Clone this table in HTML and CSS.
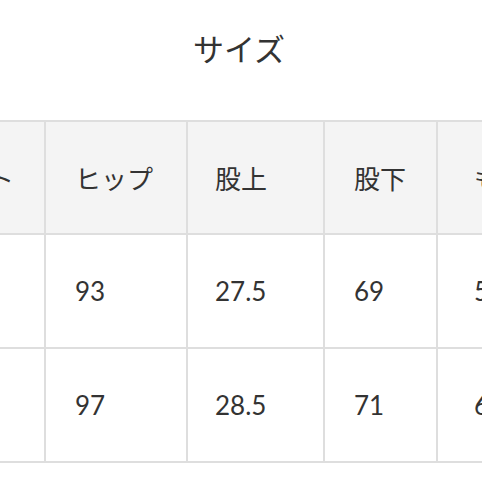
FILE: index.html
```html
<!DOCTYPE html>
<html lang="ja">
<head>
<meta charset="utf-8">
<link rel="stylesheet" href="styles.css">
</head>
<body>
<h2 class="title">サイズ</h2>
<div class="wrap">
<table class="size-table">
<colgroup>
<col class="c1"><col class="c2"><col class="c3"><col class="c4"><col class="c5">
</colgroup>
<thead>
<tr>
<th class="p1">ウエスト</th>
<th class="p2">ヒップ</th>
<th class="p3">股上</th>
<th class="p4">股下</th>
<th class="p5">もも周り</th>
</tr>
</thead>
<tbody>
<tr>
<td class="p1">S</td>
<td class="p2">93</td>
<td class="p3">27.5</td>
<td class="p4">69</td>
<td class="p5">58</td>
</tr>
<tr>
<td class="p1">M</td>
<td class="p2">97</td>
<td class="p3">28.5</td>
<td class="p4">71</td>
<td class="p5">60</td>
</tr>
</tbody>
</table>
</div>
</body>
</html>
```
FILE: styles.css
```css
html, body {
  margin: 0;
  padding: 0;
  background: #ffffff;
}
body {
  width: 482px;
  height: 482px;
  overflow: hidden;
  color: #333333;
  font-family: Lato, "Noto Sans CJK JP", sans-serif;
}
.title {
  margin: 0;
  height: 120px;
  box-sizing: border-box;
  padding-top: 33px;
  padding-right: 4px;
  font-family: "Noto Sans CJK JP", sans-serif;
  font-weight: 400;
  font-size: 31px;
  line-height: 30px;
  text-align: center;
  color: #333333;
}
.wrap {
  width: 482px;
  overflow: hidden;
}
.size-table {
  margin-left: -122px;
  border-collapse: collapse;
  table-layout: fixed;
  width: 803px;
}
.c1 { width: 166px; }
.c2 { width: 142px; }
.c3 { width: 137px; }
.c4 { width: 113px; }
.c5 { width: 245px; }
.size-table th,
.size-table td {
  border: 2px solid #dedede;
  padding: 0;
  text-align: left;
  vertical-align: middle;
  white-space: nowrap;
  overflow: hidden;
}
.size-table th {
  height: 111px;
  background: #f4f4f4;
  font-family: "Noto Sans CJK JP", sans-serif;
  font-weight: 400;
  font-size: 26px;
}
.size-table td {
  height: 112px;
  background: #ffffff;
  font-family: Lato, sans-serif;
  font-size: 26px;
}
.p1 { padding-left: 30px !important; }
.p2 { padding-left: 29px !important; }
.p3 { padding-left: 27px !important; }
.p4 { padding-left: 29px !important; }
.p5 { padding-left: 36px !important; }
```
